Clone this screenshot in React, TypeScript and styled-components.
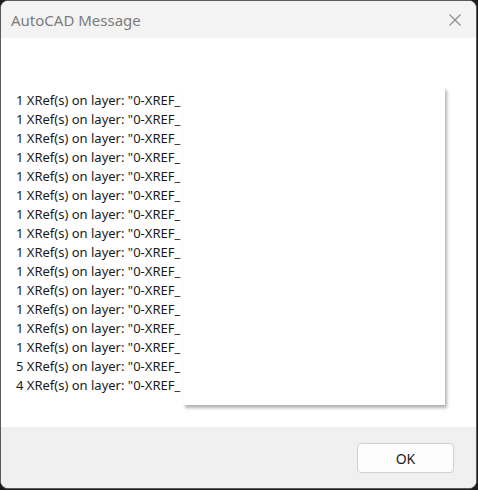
import React from "react";
import styled, { createGlobalStyle } from "styled-components";

const Global = createGlobalStyle`
  html, body { margin: 0; padding: 0; background: #1c1c1c; }
  body { width: 478px; height: 490px; overflow: hidden; }
`;

const Window = styled.div`
  position: relative;
  box-sizing: border-box;
  width: 477px;
  height: 489px;
  border: 1px solid #5a5a5a;
  border-radius: 8px;
  overflow: hidden;
  background: #f0f0f0;
  display: flex;
  flex-direction: column;
  font-family: "Noto Sans", "Open Sans", sans-serif;
`;

const TitleBar = styled.div`
  height: 37px;
  background: #f3f3f3;
  display: flex;
  align-items: center;
  justify-content: space-between;
  padding: 0 14px 0 10px;
`;

const Title = styled.span`
  font-size: 15px;
  color: #7b7b7b;
`;

const Close = styled.div`
  width: 14px;
  height: 14px;
  display: flex;
`;

const Content = styled.div`
  position: relative;
  height: 389px;
  background: #ffffff;
  box-sizing: border-box;
  padding: 53px 0 0 15px;
`;

const Line = styled.div`
  font-size: 13px;
  line-height: 19px;
  height: 19px;
  color: #1a1a1a;
  white-space: nowrap;
`;

const Overlay = styled.div`
  position: absolute;
  left: 182px;
  top: 49px;
  width: 262px;
  height: 318px;
  background: #ffffff;
  box-shadow: 2px 3px 3px rgba(0, 0, 0, 0.3);
`;

const Footer = styled.div`
  flex: 1;
  display: flex;
  justify-content: flex-end;
  align-items: flex-start;
  padding: 16px 22px 0 0;
  background: #f0f0f0;
`;

const Button = styled.button`
  width: 97px;
  height: 30px;
  box-sizing: border-box;
  border: 1px solid #d0d0d0;
  border-radius: 4px;
  background: #fdfdfd;
  font-family: "Noto Sans", "Open Sans", sans-serif;
  font-size: 14px;
  color: #1a1a1a;
  padding: 0;
`;

const counts = [1, 1, 1, 1, 1, 1, 1, 1, 1, 1, 1, 1, 1, 1, 5, 4];

export default function App() {
  return (
    <>
      <Global />
      <Window>
        <TitleBar>
          <Title>AutoCAD Message</Title>
          <Close>
            <svg width="14" height="14" viewBox="0 0 14 14">
              <path d="M1.5 1.5 L12.5 12.5 M12.5 1.5 L1.5 12.5" stroke="#8a8a8a" strokeWidth="1.1" fill="none" />
            </svg>
          </Close>
        </TitleBar>
        <Content>
          {counts.map((c, i) => (
            <Line key={i}>{c} XRef(s) on layer: "0-XREF_</Line>
          ))}
          <Overlay />
        </Content>
        <Footer>
          <Button>OK</Button>
        </Footer>
      </Window>
    </>
  );
}
